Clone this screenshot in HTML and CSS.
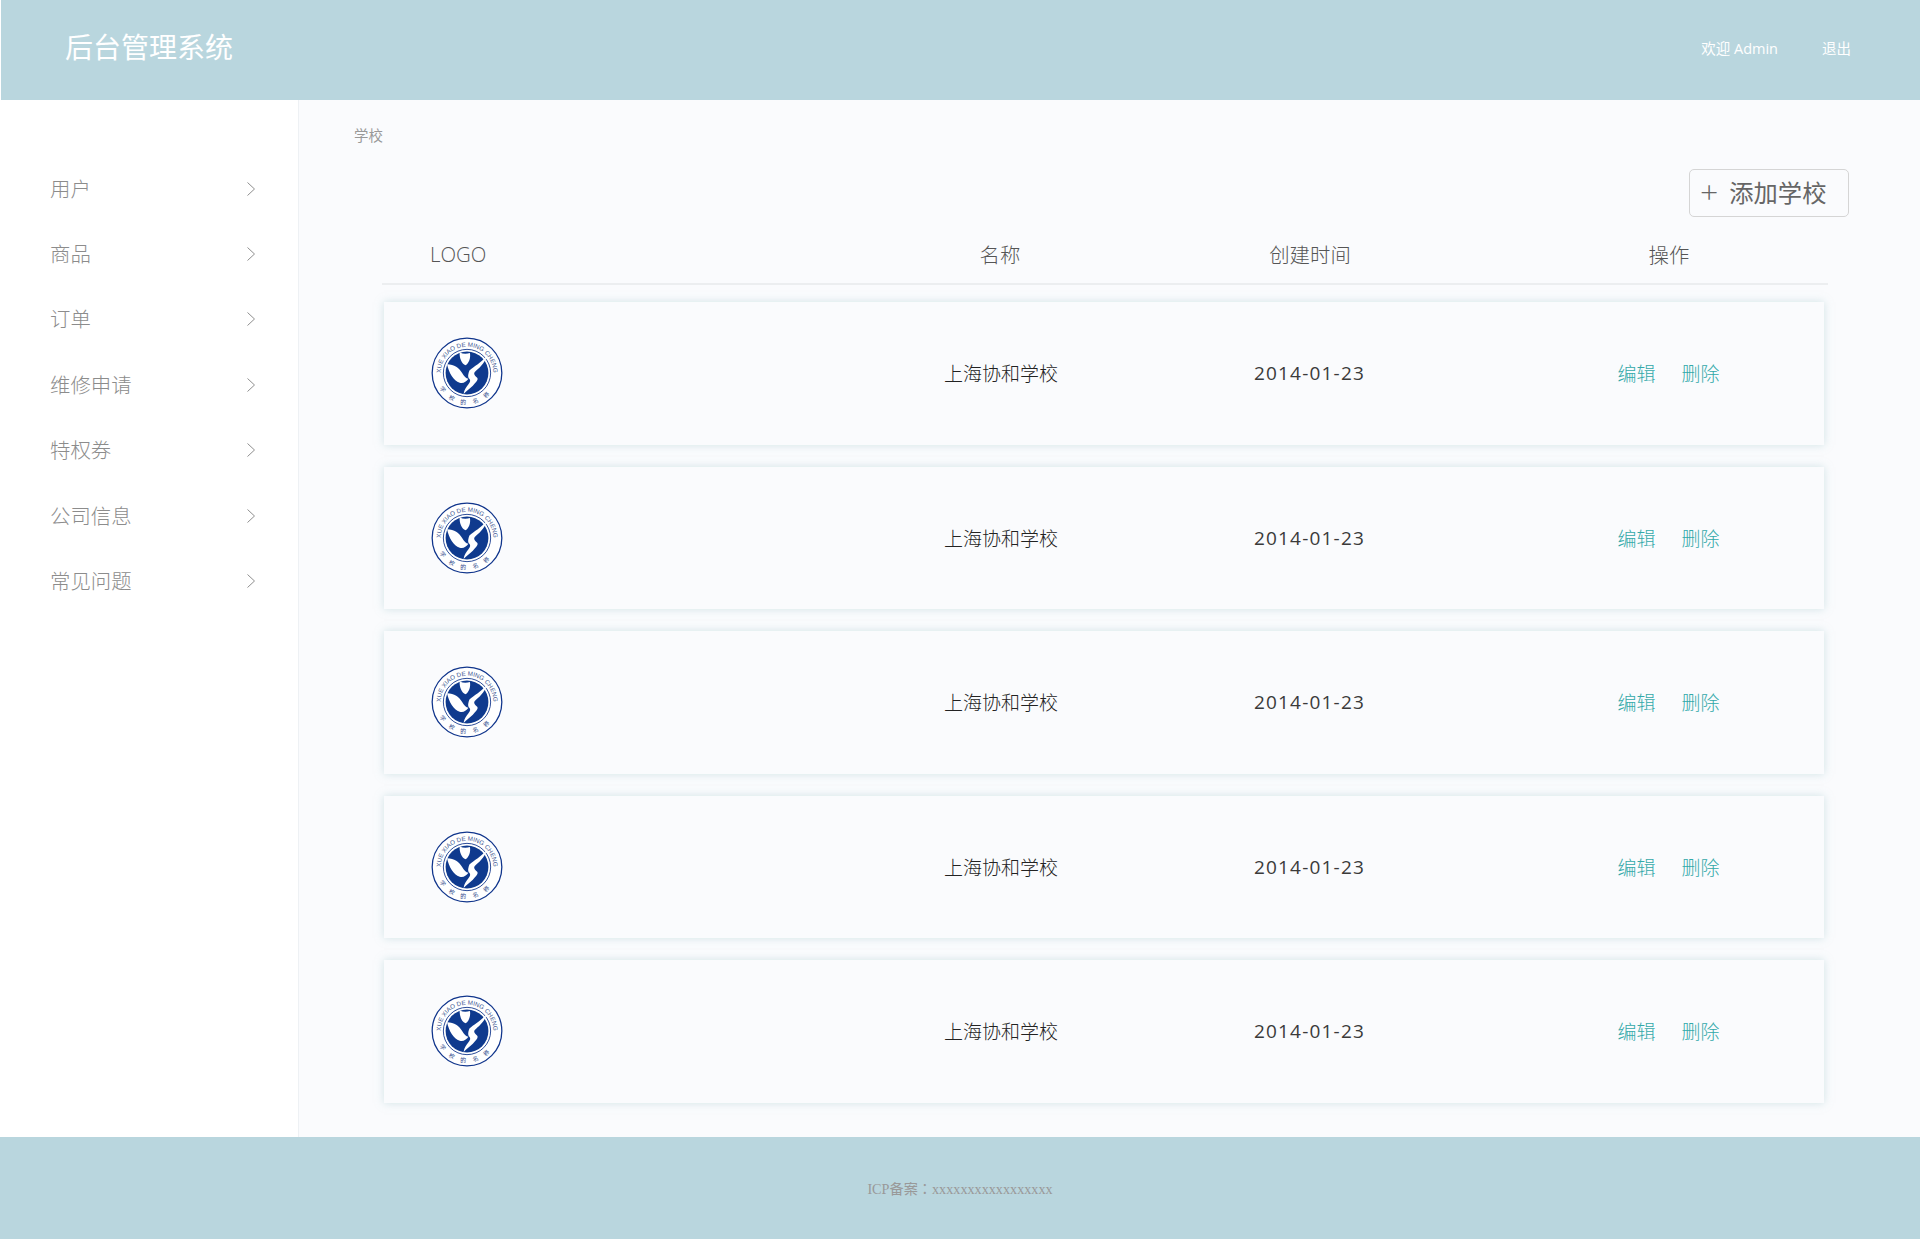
FILE: index.html
```html
<!DOCTYPE html>
<html lang="zh-CN">
<head>
<meta charset="utf-8">
<title>后台管理系统</title>
<link rel="stylesheet" href="styles.css">
</head>
<body>
<svg class="defs" width="0" height="0" aria-hidden="true">
  <defs>
    <symbol id="logo" viewBox="0 0 74 74">
      <circle cx="37" cy="37" r="35.8" fill="#fff" stroke="#10358c" stroke-width="1.3"/>
      <path id="arcTop" d="M12.53 48.4 A27 27 0 1 1 61.47 48.4" fill="none"/>
      <path id="arcBot" d="M5 37 A32 32 0 0 0 69 37" fill="none"/>
      <text class="logo-top"><textPath href="#arcTop" startOffset="50%" text-anchor="middle">XUE XIAO DE MING CHENG</textPath></text>
      <text class="logo-bot"><textPath href="#arcBot" startOffset="50%" text-anchor="middle">学校的名称</textPath></text>
      <circle cx="37" cy="37" r="24.3" fill="#fff" stroke="#10358c" stroke-width=".9"/>
      <circle cx="37" cy="37" r="22" fill="#0f3a8e"/>
      <path d="M29.5 16 C33 17.5 36.5 17.5 40 16.5 C41 21 39 27.5 35.5 29 C31.5 28 29 21 29.5 16Z" fill="#fff"/>
      <path d="M57.5 19 C55 28 49 32 45 36 C43.5 38 45 39.5 47.5 42 C49 44 46 47 43 50 C40 52.5 36.5 55.5 33.5 58.5 C34 54 36.5 51 38.5 48.5 C40.5 46 41 44.5 39 42.5 C37.5 41 38.5 37 39.5 34.5 C44 30 52 26.5 57.5 19Z" fill="#fff"/>
      <path d="M16.5 28 C24 28 29 32 32 37 C34 40.5 36 42.5 38.5 43 C36 46.5 33 48 29.5 47 C23 45 18.5 37 16.5 28Z" fill="#fff"/>
    </symbol>
    <symbol id="chev" viewBox="0 0 10 16">
      <path d="M1.5 1.5 L8.5 8 L1.5 14.5" fill="none" stroke="#8f8f8f" stroke-width="1"/>
    </symbol>
  </defs>
</svg>

<header class="topbar">
  <h1 class="brand">后台管理系统</h1>
  <div class="userbox">
    <span>欢迎 Admin</span>
    <a class="logout">退出</a>
  </div>
</header>

<div class="middle">
  <nav class="sidebar">
    <a class="nav-item"><span>用户</span><svg class="chev"><use href="#chev"/></svg></a>
    <a class="nav-item"><span>商品</span><svg class="chev"><use href="#chev"/></svg></a>
    <a class="nav-item"><span>订单</span><svg class="chev"><use href="#chev"/></svg></a>
    <a class="nav-item"><span>维修申请</span><svg class="chev"><use href="#chev"/></svg></a>
    <a class="nav-item"><span>特权券</span><svg class="chev"><use href="#chev"/></svg></a>
    <a class="nav-item"><span>公司信息</span><svg class="chev"><use href="#chev"/></svg></a>
    <a class="nav-item"><span>常见问题</span><svg class="chev"><use href="#chev"/></svg></a>
  </nav>

  <main class="content">
    <div class="crumb">学校</div>
    <div class="toolbar">
      <button class="add-btn"><span class="plus">+</span>添加学校</button>
    </div>
    <div class="table">
      <div class="grid head">
        <div class="cell-logo">LOGO</div>
        <div>名称</div>
        <div>创建时间</div>
        <div>操作</div>
      </div>
      <div class="grid card">
        <div class="cell-logo"><svg class="logo"><use href="#logo"/></svg></div>
        <div>上海协和学校</div>
        <div class="date">2014-01-23</div>
        <div class="ops"><a>编辑</a><a>删除</a></div>
      </div>
      <div class="grid card">
        <div class="cell-logo"><svg class="logo"><use href="#logo"/></svg></div>
        <div>上海协和学校</div>
        <div class="date">2014-01-23</div>
        <div class="ops"><a>编辑</a><a>删除</a></div>
      </div>
      <div class="grid card">
        <div class="cell-logo"><svg class="logo"><use href="#logo"/></svg></div>
        <div>上海协和学校</div>
        <div class="date">2014-01-23</div>
        <div class="ops"><a>编辑</a><a>删除</a></div>
      </div>
      <div class="grid card">
        <div class="cell-logo"><svg class="logo"><use href="#logo"/></svg></div>
        <div>上海协和学校</div>
        <div class="date">2014-01-23</div>
        <div class="ops"><a>编辑</a><a>删除</a></div>
      </div>
      <div class="grid card">
        <div class="cell-logo"><svg class="logo"><use href="#logo"/></svg></div>
        <div>上海协和学校</div>
        <div class="date">2014-01-23</div>
        <div class="ops"><a>编辑</a><a>删除</a></div>
      </div>
    </div>
  </main>
</div>

<footer class="footer" lang="zh-TW">ICP备案：xxxxxxxxxxxxxxxxx</footer>
</body>
</html>
```
FILE: styles.css
```css
* { box-sizing: border-box; }
html, body { margin: 0; height: 100%; }
body {
  width: 1920px;
  height: 1239px;
  overflow: hidden;
  background: #fff;
  font-family: "Open Sans", "Noto Sans CJK SC", sans-serif;
  display: flex;
  flex-direction: column;
  position: relative;
}
.defs { position: absolute; }

.topbar {
  height: 100px;
  margin-left: 1px;
  background: #b9d6de;
  color: #fff;
  display: flex;
  align-items: center;
  justify-content: space-between;
  padding: 0 69px 0 64px;
  flex: none;
}
.brand { margin: 0 0 7px; font-size: 28px; font-weight: 400; line-height: 40px; }
.userbox { display: flex; gap: 44px; font-size: 14.5px; margin-bottom: 6px; }

.middle { flex: 1; display: flex; min-height: 0; }

.sidebar {
  width: 299px;
  flex: none;
  background: #fff;
  border-right: 1px solid #eef1f4;
  padding-top: 55.5px;
}
.nav-item {
  height: 65.4px;
  display: flex;
  align-items: center;
  justify-content: space-between;
  padding: 0 42px 0 50px;
  font-size: 20.4px;
  color: #8c8c8c;
  font-weight: 300;
}
.nav-item span { margin-bottom: 1px; }
.chev { width: 10px; height: 16px; margin-top: 1px; }

.content { flex: 1; background: #fafbfd; padding: 0 0 0 55px; min-width: 0; }
.crumb { font-size: 14.4px; color: #999; line-height: 20px; padding-top: 26px; }
.toolbar { display: flex; justify-content: flex-end; padding: 23px 71px 0 0; }
.add-btn {
  width: 160px;
  height: 48px;
  border: 1px solid #d5d5d5;
  border-radius: 5px;
  background: transparent;
  color: #666;
  font: 400 24.3px "Open Sans", "Noto Sans CJK SC", sans-serif;
  display: flex;
  align-items: center;
  padding: 0 0 3px 10px;
}
.plus { font-size: 32px; font-weight: 300; margin-right: 11px; line-height: 1; }

.table { margin-left: 28px; width: 1446px; }
.grid {
  display: grid;
  align-items: center;
  text-align: center;
}
.cell-logo { text-align: left; padding-left: 47px; }
.head {
  grid-template-columns: 507px 218px 402px 316px;
  height: 57px;
  margin-top: 11px;
  padding: 0 0 4px 2px;
  font-size: 20.4px;
  color: #555;
  font-weight: 300;
  border-bottom: 2px solid #eceef0;
}
.head .cell-logo { padding-left: 46px; }
.card {
  grid-template-columns: 508px 218px 399px 315px;
  width: 1440px;
  height: 142.5px;
  margin: 17px 0 22px 2px;
  background: #fafbfd;
  box-shadow: 0 0 8px rgba(170, 205, 210, .5);
  font-size: 19px;
  color: #222;
  font-weight: 300;
}
.card + .card { margin-top: 0; }
.cell-logo .logo { display: block; width: 72px; height: 72px; }
.date { letter-spacing: 1.2px; font-weight: 400; color: #3a3a3a; }
.ops { display: flex; justify-content: center; gap: 26px; padding-left: 4px; color: #33a9a9; }

.logo-top { font: 6.4px "Liberation Sans", sans-serif; fill: #3b548f; }
.logo-bot { font: 6px "Noto Sans CJK SC", sans-serif; fill: #2f4a8c; letter-spacing: 7.6px; }

.footer {
  height: 102px;
  flex: none;
  background: #b9d6de;
  color: #999;
  font: 14.2px "Liberation Serif", "Noto Sans CJK TC", serif;
  display: flex;
  align-items: center;
  justify-content: center;
}
```
